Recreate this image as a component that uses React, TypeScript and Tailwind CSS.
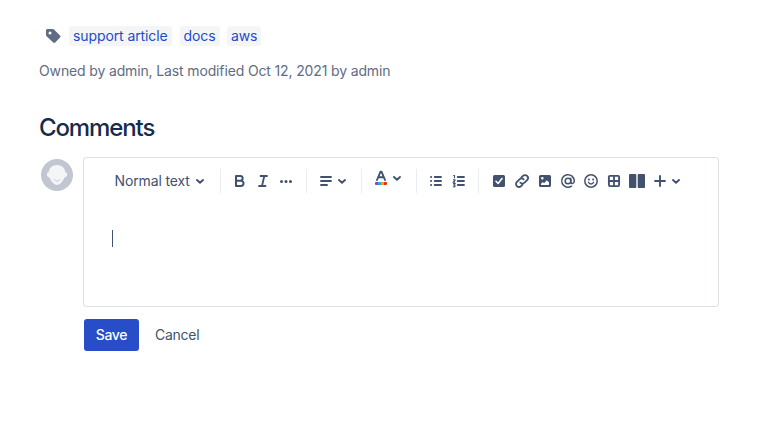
import React from 'react';

const labels = ['support article', 'docs', 'aws'];

function Icon({ label, children }: { label: string; children: React.ReactNode }) {
  return (
    <button aria-label={label} className="-mr-px h-6 w-6 shrink-0">
      <svg width="24" height="24" viewBox="0 0 24 24" fill="none">{children}</svg>
    </button>
  );
}

function Chevron() {
  return (
    <svg width="10" height="24" viewBox="0 0 10 24" fill="none" className="shrink-0">
      <path d="M2 11 5 13.700 8 11" stroke="currentColor" strokeWidth="1.900" strokeLinecap="round" strokeLinejoin="round" />
    </svg>
  );
}

function Separator() {
  return <span className="h-6 w-px shrink-0 bg-[#ebecf0]" />;
}

function Avatar() {
  return (
    <svg width="32" height="32" viewBox="0 0 32 32" className="mt-0.5 shrink-0">
      <circle cx="16" cy="16" r="16" fill="#c1c7d0" />
      <path d="M16 6c-4.700 0-8 3-8.200 7.300-1.300.1-2 .9-1.900 2.200.1 1.700 1.200 2.900 2.700 3.100C9.600 22 13 26 16 26s6.400-4 7.400-7.400c1.500-.2 2.600-1.400 2.700-3.100.1-1.300-.6-2.100-1.900-2.200C24 9 20.700 6 16 6z" fill="#f4f5f7" />
      <path d="M13.200 20.400c1.400 2.200 4.200 2.200 5.600 0" stroke="#c1c7d0" strokeWidth="1" strokeLinecap="round" fill="none" />
    </svg>
  );
}

function Toolbar() {
  return (
    <div className="flex h-6 items-center text-[#42526e]">
      <button className="flex w-[106px] items-center whitespace-nowrap text-left">
        <span className="w-[81px] pl-[0.5px] text-[14px] tracking-[-0.13px]">Normal text</span>
        <Chevron />
      </button>
      <Separator />
      <div className="flex pl-[7px] pr-[9px]">
        <Icon label="Bold">
          <path d="M8 7h4.300a2.350 2.350 0 0 1 0 4.700H8zM8 11.700h4.900a2.650 2.650 0 0 1 0 5.300H8z" stroke="currentColor" strokeWidth="2" strokeLinejoin="round" />
        </Icon>
        <Icon label="Italic">
          <path d="M9.500 7h6.500M8 17h6.500M13.300 7l-2.300 10" stroke="currentColor" strokeWidth="1.800" strokeLinecap="round" />
        </Icon>
        <Icon label="More formatting">
          <g fill="currentColor">
            <circle cx="7.500" cy="12.500" r="1.500" />
            <circle cx="12" cy="12.500" r="1.500" />
            <circle cx="16.500" cy="12.500" r="1.500" />
          </g>
        </Icon>
      </div>
      <Separator />
      <div className="flex w-[54px] pl-[7px]">
        <Icon label="Text alignment">
          <path d="M7 8h10M7 12h10M7 16h6" stroke="currentColor" strokeWidth="1.900" strokeLinecap="round" />
        </Icon>
        <Chevron />
      </div>
      <Separator />
      <div className="-mt-[6px] flex w-[54px] pl-[7px]">
        <Icon label="Text color">
          <path d="M8 14 11.500 5.700h1L16 14M9.300 11.300h5.400" stroke="currentColor" strokeWidth="1.900" strokeLinecap="round" strokeLinejoin="round" />
          <path d="M7 16h2v3H7a1 1 0 0 1-1-1v-1a1 1 0 0 1 1-1z" fill="#6554c0" />
          <path d="M9 16h3v3H9z" fill="#2ea9d6" />
          <path d="M12 16h3v3h-3z" fill="#ff991f" />
          <path d="M15 16h2a1 1 0 0 1 1 1v1a1 1 0 0 1-1 1h-2z" fill="#de350b" />
        </Icon>
        <Chevron />
      </div>
      <Separator />
      <div className="flex w-[61px] pl-[7px]">
        <Icon label="Bullet list">
          <path d="M10.700 8H17M10.700 12H17M10.700 16H17" stroke="currentColor" strokeWidth="1.800" strokeLinecap="round" />
          <g fill="currentColor">
            <circle cx="7.100" cy="8" r="1.100" />
            <circle cx="7.100" cy="12" r="1.100" />
            <circle cx="7.100" cy="16" r="1.100" />
          </g>
        </Icon>
        <Icon label="Numbered list">
          <path d="M10.700 8H17M10.700 12H17M10.700 16H17" stroke="currentColor" strokeWidth="1.800" strokeLinecap="round" />
          <path d="M6.300 6.500h1.200v2.800M6 10.700h2v.5l-1.700 1.900H8.200M6 14.600h2l-.9 1.300c1.400 0 1.300 2-.1 2-.5 0-.8-.1-1.100-.3" stroke="currentColor" strokeWidth="1.100" />
        </Icon>
      </div>
      <Separator />
      <div className="flex pl-2">
        <Icon label="Action item">
          <path fill="currentColor" d="M7.500 6h9A1.500 1.500 0 0 1 18 7.500v9a1.500 1.500 0 0 1-1.500 1.500h-9A1.500 1.500 0 0 1 6 16.500v-9A1.500 1.500 0 0 1 7.500 6z" />
          <path d="m9 12.300 2.100 2.100L15 9.500" stroke="white" strokeWidth="1.600" strokeLinecap="round" strokeLinejoin="round" />
        </Icon>
        <Icon label="Link">
          <g stroke="currentColor" strokeWidth="1.800" strokeLinecap="round" strokeLinejoin="round">
            <path d="m11.400 8.400 1.500-1.500a2.950 2.950 0 0 1 4.200 4.200L14.500 13.700a2.950 2.950 0 0 1-4.200 0" />
            <path d="m12.600 15.600-1.500 1.500a2.950 2.950 0 0 1-4.200-4.200l2.600-2.600a2.950 2.950 0 0 1 4.200 0" />
          </g>
        </Icon>
        <Icon label="Image">
          <path fillRule="evenodd" fill="currentColor" d="M7.500 6h9A1.500 1.500 0 0 1 18 7.500v9a1.500 1.500 0 0 1-1.500 1.500h-9A1.500 1.500 0 0 1 6 16.500v-9A1.500 1.500 0 0 1 7.500 6zM9.300 8a1.300 1.300 0 1 0 0 2.600 1.300 1.300 0 0 0 0-2.600zM8 16h8v-2.600l-2.200-2.100-2.700 3-1.300-1.200L8 14.800z" />
        </Icon>
        <Icon label="Mention">
          <circle cx="12" cy="12" r="2.800" stroke="currentColor" strokeWidth="1.500" />
          <path d="M14.800 9.200v3.600c0 2.400 3.500 2.200 3.500-.8A6.300 6.300 0 1 0 15.500 17.200" stroke="currentColor" strokeWidth="1.500" strokeLinecap="round" />
        </Icon>
        <Icon label="Emoji">
          <circle cx="12" cy="12" r="6.200" stroke="currentColor" strokeWidth="1.500" />
          <circle cx="9.900" cy="10.400" r="1" fill="currentColor" />
          <circle cx="14.100" cy="10.400" r="1" fill="currentColor" />
          <path d="M9.400 13.300c1 2.200 4.200 2.200 5.200 0" stroke="currentColor" strokeWidth="1.400" strokeLinecap="round" />
        </Icon>
        <Icon label="Table">
          <rect x="6.900" y="6.900" width="10.200" height="10.200" rx="1" stroke="currentColor" strokeWidth="1.900" />
          <path d="M12 7v10M7 12h10" stroke="currentColor" strokeWidth="1.800" />
        </Icon>
        <Icon label="Layouts">
          <rect x="4" y="5" width="7.300" height="14" rx="1" fill="currentColor" />
          <rect x="12.700" y="5" width="7.300" height="14" rx="1" fill="currentColor" />
        </Icon>
        <Icon label="Insert">
          <path d="M12 7v10M7 12h10" stroke="currentColor" strokeWidth="1.900" strokeLinecap="round" />
        </Icon>
        <Chevron />
      </div>
    </div>
  );
}

export default function App() {
  return (
    <div className="h-[433px] w-[767px] overflow-hidden bg-white pl-[39px] pt-[26px] font-['Inter','Liberation_Sans',sans-serif] text-[14px] leading-5">
      <div className="flex h-5 items-center">
        <svg width="16" height="16" viewBox="0 0 16 16" className="ml-[6px] mr-2 -mt-px shrink-0">
          <path fillRule="evenodd" fill="#5e6c84" d="M2.500 1h5.300c.5 0 .9.200 1.200.5l6 6c.6.6.6 1.400 0 2L10.200 14.500c-.6.600-1.400.6-2 0L1.600 8.200C1.200 7.800 1 7.400 1 6.900V2.500C1 1.600 1.600 1 2.500 1zM5 3.600a1.500 1.500 0 1 0 0 3 1.500 1.500 0 0 0 0-3z" />
        </svg>
        <div className="flex gap-2">
          {labels.map((label) => (
            <a key={label} className="h-5 rounded-[3px] bg-[#f4f5f7] px-1 tracking-[-0.1px] text-[#1d4bcb] last:-ml-[0.5px] last:tracking-[-0.25px]">{label}</a>
          ))}
        </div>
      </div>

      <p className="mt-[15px] tracking-[-0.14px] text-[#5e6c84]">Owned by admin, Last modified Oct 12, 2021 by admin</p>

      <h2 className="mt-[33px] text-[24px] font-medium leading-7 tracking-[-1.12px] text-[#172b4d]">Comments</h2>

      <div className="mt-[15px] flex pl-[2px]">
        <Avatar />
        <div className="ml-[10px]">
          <div className="h-[150px] w-[636px] rounded-[3px] border border-[#dfe1e6] bg-white pl-[30px] pt-[11px]">
            <Toolbar />
            <div className="-ml-[2px] mt-[37px] h-[17px] w-px bg-[#42526e]" />
          </div>
          <div className="mt-3 flex pl-px">
            <button className="h-8 w-[55px] rounded-[3px] bg-[#274dc8] font-medium tracking-[-0.35px] text-white">Save</button>
            <button className="h-8 px-4 tracking-[-0.25px] text-[#42526e]">Cancel</button>
          </div>
        </div>
      </div>
    </div>
  );
}
